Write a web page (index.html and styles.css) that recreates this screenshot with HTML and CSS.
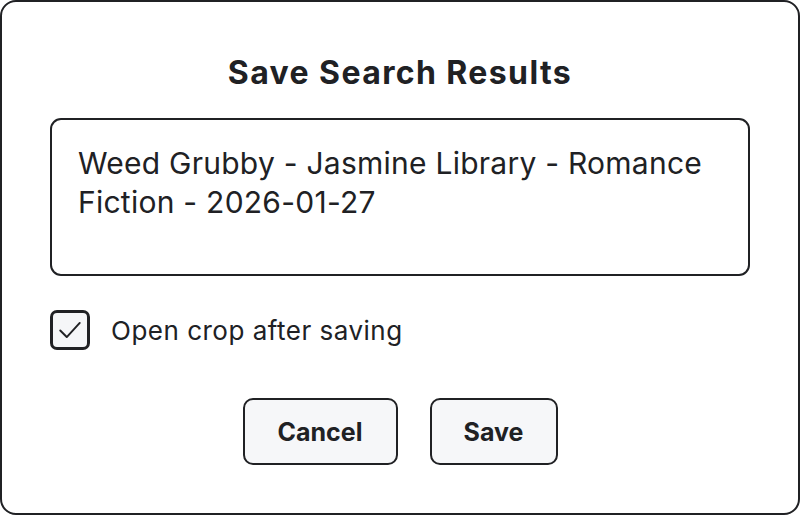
FILE: index.html
```html
<!DOCTYPE html>
<html lang="en">
<head>
<meta charset="utf-8">
<link rel="stylesheet" href="styles.css">
</head>
<body>
<div class="dialog">
  <h1 class="title">Save Search Results</h1>
  <div class="field">Weed Grubby - Jasmine Library - Romance Fiction - 2026-01-27</div>
  <label class="check-row">
    <span class="checkbox">
      <svg width="26" height="26" viewBox="0 0 24 24" fill="none" stroke="#202124" stroke-width="1.8" stroke-linecap="round" stroke-linejoin="round"><path d="M3 12.5 L9 18.5 L21 5.5"/></svg>
    </span>
    <span class="check-label">Open crop after saving</span>
  </label>
  <div class="actions">
    <button class="btn btn-cancel">Cancel</button>
    <button class="btn btn-save">Save</button>
  </div>
</div>
</body>
</html>
```
FILE: styles.css
```css
html, body {
  margin: 0;
  padding: 0;
  background: #ffffff;
}
body {
  font-family: Inter, "Noto Sans", sans-serif;
  color: #202124;
}
.dialog {
  box-sizing: border-box;
  width: 800px;
  height: 515px;
  border: 2px solid #202124;
  border-radius: 16px;
  padding: 0 48px;
  display: flex;
  flex-direction: column;
}
.title {
  margin: 50px 0 0;
  font-size: 32px;
  font-weight: 700;
  letter-spacing: 1.4px;
  line-height: 42px;
  text-align: center;
  color: #202124;
}
.field {
  box-sizing: border-box;
  margin-top: 24px;
  height: 158px;
  border: 2px solid #202124;
  border-radius: 11px;
  padding: 24px 26px;
  font-size: 30px;
  letter-spacing: 0.25px;
  line-height: 39px;
  color: #202124;
}
.check-row {
  display: flex;
  align-items: center;
  margin-top: 34px;
  gap: 21px;
}
.checkbox {
  box-sizing: border-box;
  width: 40px;
  height: 40px;
  border: 3px solid #202124;
  border-radius: 7px;
  background: #f5f6f8;
  display: flex;
  align-items: center;
  justify-content: center;
}
.check-label {
  font-size: 26px;
  letter-spacing: 0.5px;
  color: #202124;
}
.actions {
  display: flex;
  justify-content: center;
  gap: 32px;
  margin-top: 48px;
}
.btn {
  box-sizing: border-box;
  height: 67px;
  border: 2px solid #202124;
  border-radius: 10px;
  background: #f6f7f9;
  font-family: Inter, "Noto Sans", sans-serif;
  font-size: 25px;
  font-weight: 700;
  color: #202124;
  padding: 0;
}
.btn-cancel { width: 155px; }
.btn-save { width: 128px; }
```
